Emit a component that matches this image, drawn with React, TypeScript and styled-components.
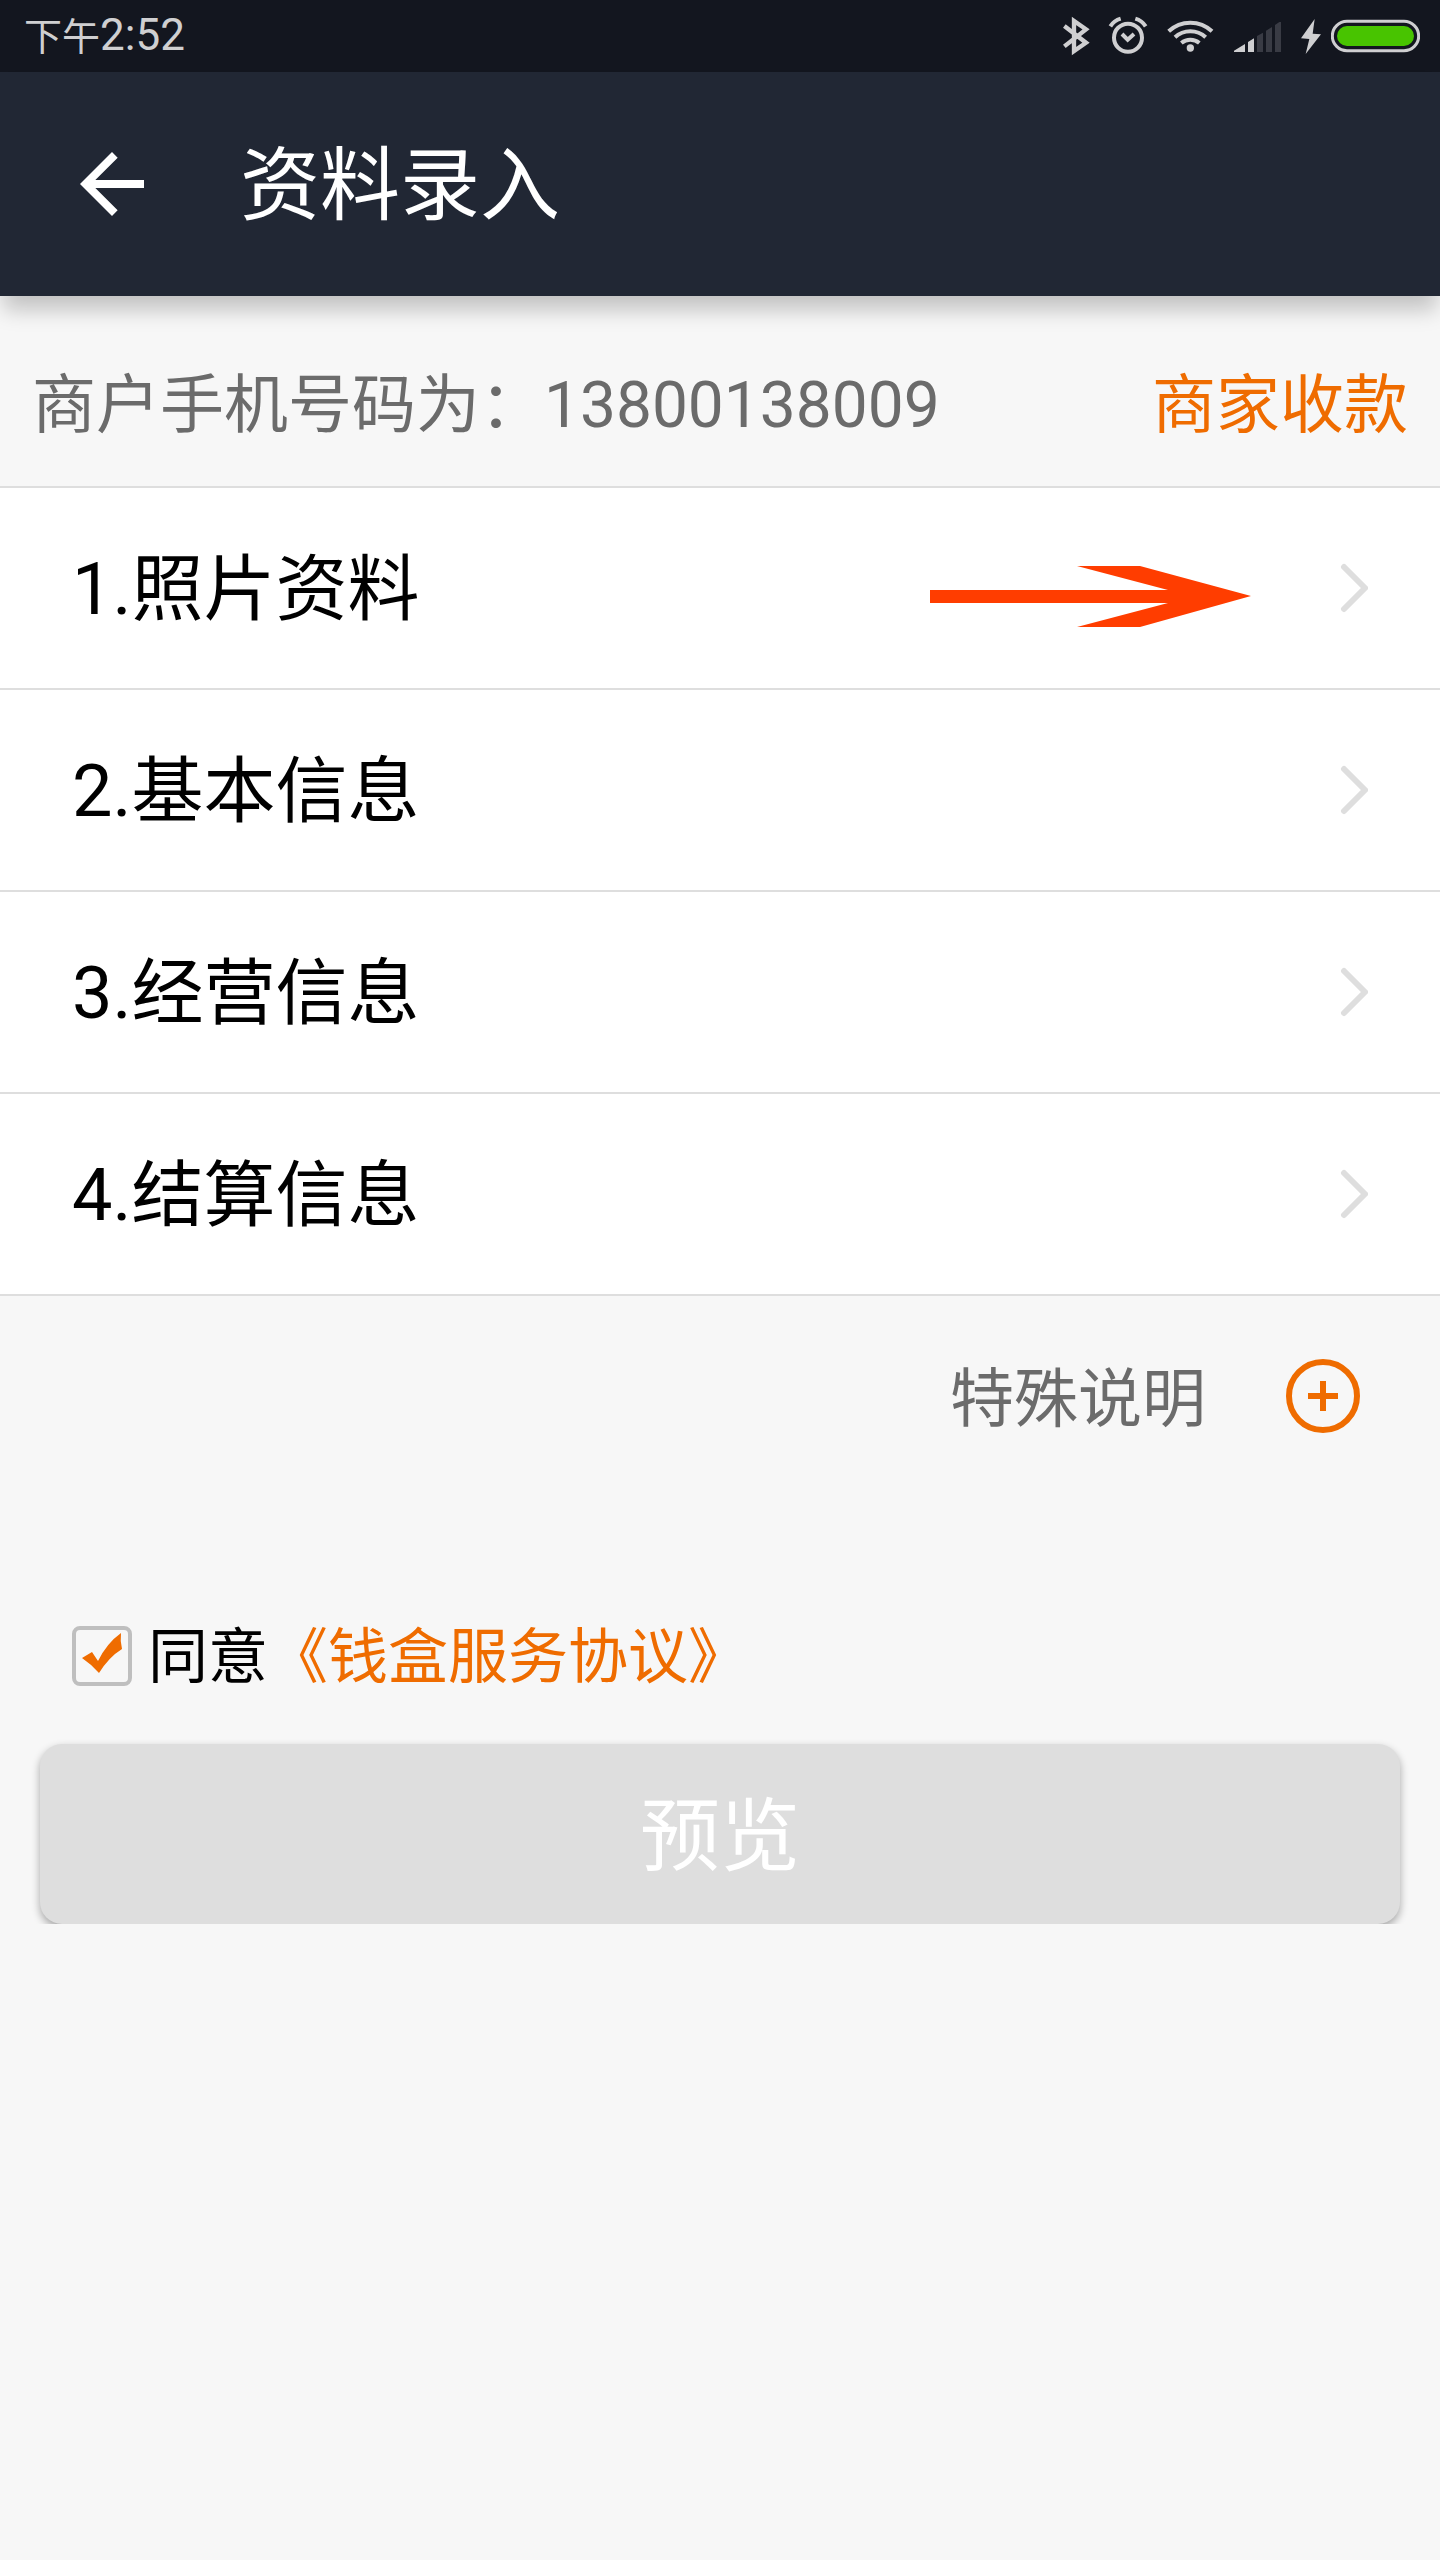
import React, { useState } from "react";
import styled, { createGlobalStyle } from "styled-components";

const colors = {
  page: "#f7f7f7",
  status: "#13161f",
  bar: "#212734",
  statusInk: "#cfcfd1",
  accent: "#ef6c00",
  muted: "#6b6b6b",
  line: "#dedede",
};

const GlobalStyle = createGlobalStyle`
  *, *::before, *::after { box-sizing: border-box; }
  body {
    margin: 0;
    background: ${colors.page};
    color: #000;
    font-family: Roboto, "Noto Sans CJK SC", sans-serif;
  }
  button {
    border: 0;
    padding: 0;
    background: none;
    color: inherit;
    font: inherit;
    cursor: pointer;
  }
  a { text-decoration: none; }
  svg { display: block; }
`;

const Screen = styled.div`
  display: flex;
  flex-direction: column;
  min-height: 100vh;
`;

const StatusBar = styled.div`
  display: flex;
  align-items: center;
  justify-content: space-between;
  height: 72px;
  padding: 0 20px 0 24px;
  background: ${colors.status};
  color: ${colors.statusInk};
`;

const Clock = styled.time`
  font-size: 38px;
  line-height: 48px;
`;

const ClockDigits = styled.span`
  font-size: 44px;
`;

const StatusIcons = styled.div<{ $gap: number }>`
  display: flex;
  align-items: center;
  gap: ${(p) => p.$gap}px;
`;

const AppBar = styled.header`
  position: relative;
  display: flex;
  align-items: center;
  gap: 80px;
  height: 224px;
  padding: 0 64px;
  background: ${colors.bar};
  color: #fff;
  box-shadow: 0 17px 20px -3px rgba(0, 0, 0, 0.21);
`;

const Title = styled.h1`
  margin: 0;
  padding-top: 4px;
  font-size: 80px;
  font-weight: 400;
  line-height: 96px;
`;

const Merchant = styled.div`
  display: flex;
  align-items: center;
  justify-content: space-between;
  padding: 70px 32px 40px;
  font-size: 64px;
  line-height: 80px;
  color: ${colors.muted};
`;

const AccentLink = styled.a`
  color: ${colors.accent};
`;

const Steps = styled.ul`
  margin: 0;
  padding: 0;
  list-style: none;
  border-top: 2px solid ${colors.line};
  background: #fff;
`;

const Step = styled.li`
  position: relative;
  border-bottom: 2px solid ${colors.line};
`;

const StepButton = styled.button`
  display: flex;
  align-items: center;
  justify-content: space-between;
  width: 100%;
  height: 200px;
  padding: 0 72px;
  font-size: 72px;
  line-height: 88px;
`;

const StepName = styled.span`
  padding-top: 4px;
`;

const Pointer = styled.svg`
  position: absolute;
  top: 76px;
  right: 188px;
  pointer-events: none;
`;

const Note = styled.div`
  display: flex;
  align-items: center;
  justify-content: flex-end;
  gap: 80px;
  padding: 56px 80px;
  font-size: 64px;
  line-height: 80px;
  color: ${colors.muted};
`;

const NoteText = styled.span`
  padding-top: 8px;
`;

const Agreement = styled.div`
  display: flex;
  align-items: center;
  padding: 122px 72px 42px;
  font-size: 60px;
  line-height: 72px;

  > a { padding-top: 4px; }
`;

const AgreeLabel = styled.label`
  display: flex;
  align-items: center;
  gap: 16px;
`;

const AgreeText = styled.span`
  padding-top: 4px;
`;

const CheckWrap = styled.span`
  display: grid;
  width: 60px;
  height: 60px;

  > * { grid-area: 1 / 1; }
  > svg { pointer-events: none; visibility: hidden; }
  > input:checked + svg { visibility: visible; }
`;

const Check = styled.input`
  appearance: none;
  width: 60px;
  height: 60px;
  margin: 0;
  border: 4px solid #bfbfbf;
  border-radius: 8px;
`;

const ButtonTray = styled.div`
  padding: 8px 40px 0;
  overflow: hidden;
`;

const Preview = styled.button`
  display: block;
  width: 100%;
  height: 180px;
  padding-top: 6px;
  border-radius: 22px;
  background: #dedede;
  color: #fff;
  font-size: 80px;
  line-height: 96px;
  box-shadow: 0 4px 8px rgba(0, 0, 0, 0.33);
`;

function Bluetooth() {
  return (
    <svg width="28" height="40" viewBox="66 48 84 120" fill="none" stroke="currentColor" strokeWidth="13" aria-hidden="true">
      <path d="M73 78 L138 128 L102 153 V63 L138 88 L73 139" />
    </svg>
  );
}

function Alarm() {
  return (
    <svg width="40" height="40" viewBox="204 48 120 120" fill="none" stroke="currentColor" aria-hidden="true">
      <circle cx="264" cy="113" r="42" strokeWidth="12" />
      <path d="M246 102 L263 119 L282 102" strokeWidth="12" />
      <path d="M211 79 Q222 62 242 56 M317 79 Q306 62 286 56" strokeWidth="12" />
    </svg>
  );
}

function Wifi() {
  return (
    <svg width="49" height="40" viewBox="378 48 147 120" fill="none" stroke="currentColor" strokeWidth="12" aria-hidden="true">
      <path d="M386 94 A95 95 0 0 1 516 94" />
      <path d="M405 112 A68 68 0 0 1 497 112" />
      <path d="M424 129 A42 42 0 0 1 478 129" />
      <circle cx="451" cy="144" r="11" fill="currentColor" stroke="none" />
    </svg>
  );
}

function Signal() {
  return (
    <svg width="49" height="40" viewBox="579 48 147 120" aria-hidden="true">
      <path d="M582 156 V152 L615 132 V156 Z M624 156 V126 L642 115 V156 Z" fill="currentColor" />
      <path d="M651 156 V108 L669 98 V156 Z M678 156 V92 L696 81 V156 Z M705 156 V75 L718 66 H723 V156 Z" fill="#393b44" />
    </svg>
  );
}

function Bolt() {
  return (
    <svg width="22" height="40" viewBox="780 48 66 120" fill="currentColor" aria-hidden="true">
      <path d="M824 57 L783 115 L808 117 L797 162 L843 103 L818 101 Z" />
    </svg>
  );
}

function Battery() {
  return (
    <svg width="89" height="40" viewBox="873 48 267 120" aria-hidden="true">
      <rect x="877" y="64" width="259" height="88" rx="44" fill="none" stroke="currentColor" strokeWidth="9" />
      <rect x="891" y="78" width="231" height="60" rx="30" fill="#48c400" />
    </svg>
  );
}

function Chevron() {
  return (
    <svg width="28" height="50" viewBox="0 0 28 50" fill="none" stroke="#dedede" strokeWidth="6" strokeLinecap="round" strokeLinejoin="round" aria-hidden="true">
      <path d="M4 4 L25 25 L4 46" />
    </svg>
  );
}

const steps = ["1.照片资料", "2.基本信息", "3.经营信息", "4.结算信息"];

export default function App() {
  const [agreed, setAgreed] = useState(true);

  return (
    <Screen>
      <GlobalStyle />
      <StatusBar>
        <Clock>
          下午<ClockDigits>2:52</ClockDigits>
        </Clock>
        <StatusIcons $gap={18}>
          <Bluetooth />
          <Alarm />
          <Wifi />
          <Signal />
          <StatusIcons $gap={9}>
            <Bolt />
            <Battery />
          </StatusIcons>
        </StatusIcons>
      </StatusBar>

      <AppBar>
        <button type="button" aria-label="返回">
          <svg width="96" height="96" viewBox="0 0 24 24" fill="currentColor" aria-hidden="true">
            <path d="M20 11H7.83l5.59-5.59L12 4l-8 8 8 8 1.41-1.41L7.83 13H20v-2z" />
          </svg>
        </button>
        <Title>资料录入</Title>
      </AppBar>

      <main>
        <Merchant>
          <span>商户手机号码为：13800138009</span>
          <AccentLink href="#collect">商家收款</AccentLink>
        </Merchant>

        <Steps>
          {steps.map((step, index) => (
            <Step key={step}>
              <StepButton type="button">
                <StepName>{step}</StepName>
                <Chevron />
              </StepButton>
              {index === 0 && (
                <Pointer width="322" height="64" viewBox="0 0 322 64" fill="#ff3d00" aria-hidden="true">
                  <path d="M0 26 H238 L147 2 H210 L321 32 L210 63 H147 L238 39 H0 Z" />
                </Pointer>
              )}
            </Step>
          ))}
        </Steps>

        <Note>
          <NoteText>特殊说明</NoteText>
          <button type="button" aria-label="添加特殊说明">
            <svg width="74" height="74" viewBox="0 0 74 74" fill="none" stroke={colors.accent} strokeWidth="6" aria-hidden="true">
              <circle cx="37" cy="37" r="34" />
              <path d="M22 37 H52 M37 22 V52" />
            </svg>
          </button>
        </Note>

        <Agreement>
          <AgreeLabel>
            <CheckWrap>
              <Check type="checkbox" checked={agreed} onChange={(e) => setAgreed(e.target.checked)} />
              <svg width="60" height="60" viewBox="0 0 60 60" fill={colors.accent} aria-hidden="true">
                <path d="M10 32 L20 26 L26 35 Q35 17 49 7 Q48 15 50 23 Q37 31 27 47 Q19 38 10 32 Z" />
              </svg>
            </CheckWrap>
            <AgreeText>同意</AgreeText>
          </AgreeLabel>
          <AccentLink href="#agreement">《钱盒服务协议》</AccentLink>
        </Agreement>

        <ButtonTray>
          <Preview type="button">预览</Preview>
        </ButtonTray>
      </main>
    </Screen>
  );
}
